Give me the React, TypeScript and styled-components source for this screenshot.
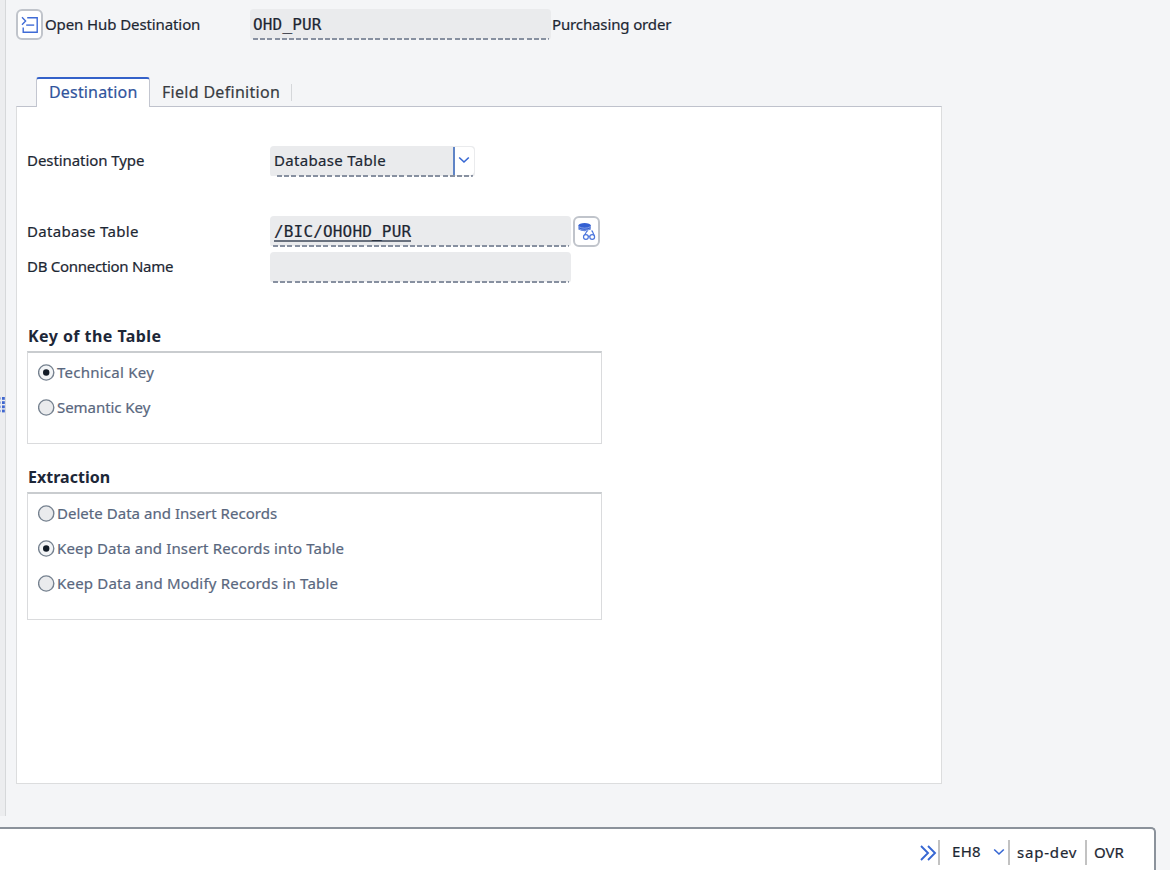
import React from "react";
import styled, { createGlobalStyle, css } from "styled-components";

const Global = createGlobalStyle`
  * { box-sizing: border-box; }
  html, body { margin: 0; background: #f4f5f7; overflow: hidden; }
  body {
    font-family: "Noto Sans", "Open Sans", sans-serif;
    font-size: 15px;
    color: #1d2733;
    -webkit-text-stroke-width: 0.2px;
  }
`;

const Screen = styled.div`
  width: 1170px;
  height: 870px;
  display: flex;
  flex-direction: column;
  background: #f4f5f7;
`;

const Workspace = styled.div`
  display: flex;
  height: 827px;
  flex: none;
`;

const Splitter = styled.div`
  width: 6px;
  height: 816px;
  background: #ecedef;
  border-right: 1px solid #d6d8da;
  display: flex;
  align-items: center;
  svg { display: block; margin-bottom: 6px; }
`;

const Content = styled.main`
  padding: 9px 0 0 10px;
  display: flex;
  flex-direction: column;
`;

const HeaderRow = styled.div`
  display: flex;
  align-items: center;
  height: 31px;
`;

const Text = styled.span<{ $track?: number; $width?: number; $size?: number; $indent?: number; $lift?: number }>`
  display: block;
  white-space: pre;
  line-height: 20px;
  font-size: ${(p) => p.$size ?? 15}px;
  letter-spacing: ${(p) => p.$track ?? 0}px;
  padding-left: ${(p) => p.$indent ?? 0}px;
  padding-bottom: ${(p) => p.$lift ?? 2}px;
  ${(p) => p.$width && css`width: ${p.$width}px; flex: none;`}
`;

const IconButton = styled.button<{ $gap?: number }>`
  width: 27px;
  height: 31px;
  flex: none;
  padding: 0;
  margin-left: ${(p) => p.$gap ?? 0}px;
  display: flex;
  align-items: center;
  justify-content: center;
  background: #fff;
  border: 2px solid #c0c4cb;
  border-radius: 6px;
  svg { display: block; }
`;

const Field = styled.div<{ $width: number; $inset?: number }>`
  width: ${(p) => p.$width}px;
  height: 31px;
  flex: none;
  display: flex;
  align-items: stretch;
  border-radius: 4px;
  background:
    repeating-linear-gradient(90deg, #8790a0 0 5px, transparent 5px 7.2px)
      ${(p) => p.$inset ?? 3}px 100% / calc(100% - ${(p) => (p.$inset ?? 3) + 2}px) 2px no-repeat,
    linear-gradient(#eaebed, #eaebed) 0 0 / 100% 30px no-repeat;
`;

const FieldText = styled(Text)`
  padding: 4px 0 0 4px;
`;

const Mono = styled.span<{ $link?: boolean }>`
  font-family: "DejaVu Sans Mono", monospace;
  font-size: 16px;
  letter-spacing: 0.17px;
  line-height: 19px;
  height: 20px;
  margin: 6px 0 0 ${(p) => (p.$link ? 4 : 3)}px;
  ${(p) => p.$link && css`border-bottom: 2px solid #69717e;`}
`;

const TabBar = styled.div`
  display: flex;
  margin: 37px 0 0 20px;
  height: 30px;
  position: relative;
  z-index: 1;
`;

const Tab = styled.div<{ $active?: boolean }>`
  height: 30px;
  display: flex;
  padding-top: 5px;
  ${(p) =>
    p.$active
      ? css`
          width: 114px;
          padding-left: 12px;
          color: #31549c;
          background: #fff;
          border: 1px solid #c3c6d0;
          border-top: 2px solid #3461c9;
          border-bottom: 0;
          border-radius: 3px 3px 0 0;
          padding-top: 3px;
        `
      : css`
          width: 141px;
          padding-left: 12px;
          color: #383c42;
        `}
`;

const TabDivider = styled.div`
  width: 1px;
  height: 17px;
  margin-top: 7px;
  background: #d5d7da;
`;

const Panel = styled.section`
  width: 926px;
  height: 678px;
  margin-top: -1px;
  background: #fff;
  border: 1px solid #dcddde;
  border-top: 1px solid #bfc2cc;
  padding: 39px 0 0 10px;
`;

const FormRow = styled.div<{ $gap: number }>`
  display: flex;
  align-items: center;
  height: 31px;
  margin-bottom: ${(p) => p.$gap}px;
`;

const Dropdown = styled.div`
  width: 21px;
  height: 28px;
  margin: 1px 1px 0 auto;
  background: #fff;
  border-left: 2px solid #5f84c6;
  border-radius: 0 4px 4px 0;
  padding: 9px 0 0 3px;
  svg { display: block; }
`;

const GroupTitle = styled.h2<{ $track: number }>`
  margin: 0;
  padding-left: 1px;
  font-size: 16px;
  font-weight: 700;
  line-height: 22px;
  height: 26px;
  letter-spacing: ${(p) => p.$track}px;
  color: #1d2738;
  -webkit-text-stroke-width: 0;
`;

const Group = styled.div<{ $height: number; $gap?: number }>`
  width: 575px;
  height: ${(p) => p.$height}px;
  border: 1px solid #dadbdd;
  border-top: 2px solid #c9cccf;
  margin-bottom: ${(p) => p.$gap ?? 0}px;
  padding: 2px 0 0 10px;
`;

const RadioRow = styled.label`
  height: 35.4px;
  display: flex;
  align-items: center;
  color: #59677e;
  gap: 2px;
  svg { display: block; margin-top: -1px; }
`;

const StatusBar = styled.footer`
  width: 1156px;
  height: 43px;
  background: #fff;
  border-top: 2px solid #8b929b;
  border-right: 2px solid #8b929b;
  border-top-right-radius: 5px;
  display: flex;
  align-items: center;
  justify-content: flex-end;
  padding: 6px 29px 0 0;
`;

const StatusDivider = styled.div`
  width: 2px;
  height: 25px;
  background: #c2c2c2;
`;

const StatusCell = styled.div<{ $width: number; $pad: number; $lift?: number }>`
  width: ${(p) => p.$width}px;
  padding-left: ${(p) => p.$pad}px;
  padding-bottom: ${(p) => p.$lift ?? 0}px;
  display: flex;
  align-items: center;
  flex: none;
  svg { display: block; }
`;

const Radio = ({ checked }: { checked?: boolean }) => (
  <svg width="17" height="17" viewBox="0 0 17 17">
    <circle cx="8.2" cy="8.5" r="7.6" fill={checked ? "#f3f5f7" : "#eaebed"} stroke="#75818f" strokeWidth="1.4" />
    {checked && <circle cx="8.2" cy="8.5" r="3.2" fill="#131c27" />}
  </svg>
);

const Chevron = () => (
  <svg width="12" height="8" viewBox="0 0 12 8" fill="none" stroke="#3767d3" strokeWidth="1.6">
    <path d="M1.2 1.5 L6 6 L10.8 1.5" />
  </svg>
);

const keyOptions = [
  { label: "Technical Key", track: 0.25, checked: true },
  { label: "Semantic Key", track: -0.05 },
];

const extractionOptions = [
  { label: "Delete Data and Insert Records", track: 0.03 },
  { label: "Keep Data and Insert Records into Table", track: 0.14, checked: true },
  { label: "Keep Data and Modify Records in Table", track: 0.19 },
];

export default function App() {
  return (
    <Screen>
      <Global />
      <Workspace>
        <Splitter>
          <svg width="5" height="16" viewBox="0 0 5 16" fill="#3f66cf">
            {[0, 4.2, 8.4, 12.6].map((y) => (
              <React.Fragment key={y}>
                <rect x="0" y={y + 0.3} width="0.8" height="2.2" opacity=".6" />
                <rect x="2" y={y} width="2.8" height="2.8" />
              </React.Fragment>
            ))}
          </svg>
        </Splitter>
        <Content>
          <HeaderRow>
            <IconButton>
              <svg width="18" height="18" viewBox="0 0 18 18" fill="none" stroke="#3f6bd6" strokeWidth="1.4">
                <path d="M1 1.3 L4.6 5 L1 8.7" />
                <path d="M6.2 1.8 H16.2 V16.2 H2.2 V11.5" />
                <path d="M5.2 9.1 H13.2" />
              </svg>
            </IconButton>
            <Text $width={207} $indent={2} $track={-0.1}>Open Hub Destination</Text>
            <Field $width={301}><Mono>OHD_PUR</Mono></Field>
            <Text $indent={1} $track={-0.13}>Purchasing order</Text>
          </HeaderRow>
          <TabBar>
            <Tab $active><Text $size={16} $track={0.17}>Destination</Text></Tab>
            <Tab><Text $size={16} $track={0.3}>Field Definition</Text></Tab>
            <TabDivider />
          </TabBar>
          <Panel>
            <FormRow $gap={39}>
              <Text $width={243} $track={-0.07} $lift={4}>Destination Type</Text>
              <Field $width={205} $inset={7}>
                <FieldText $track={0.33}>Database Table</FieldText>
                <Dropdown><Chevron /></Dropdown>
              </Field>
            </FormRow>
            <FormRow $gap={5}>
              <Text $width={243} $track={0.3}>Database Table</Text>
              <Field $width={301}><Mono $link>/BIC/OHOHD_PUR</Mono></Field>
              <IconButton $gap={2}>
                <svg width="20" height="19" viewBox="-1 0 20 19">
                  <ellipse cx="6.6" cy="3.4" rx="6.1" ry="2.4" fill="#3460d2" />
                  <path d="M0.5 3.4 V7.4 Q6.6 11 12.7 7.4 V3.4 Z" fill="#3460d2" />
                  <path d="M0.5 4.6 Q6.6 7.8 12.7 4.6 M0.5 6.7 Q6.6 9.9 12.7 6.7" stroke="#a9bcec" strokeWidth="0.7" fill="none" />
                  <path d="M5 19 V13 L8.3 8.5 H14 L18 14 V19 Z" fill="#fff" />
                  <g stroke="#4c76dd" fill="#fff" strokeWidth="1.2">
                    <path d="M6 14 L9 9 H10 M16.3 14 L14.3 9 H13.2 M10 14.3 H11.8" fill="none" />
                    <circle cx="7.9" cy="15" r="2.4" />
                    <circle cx="14.2" cy="15" r="2.4" />
                  </g>
                </svg>
              </IconButton>
            </FormRow>
            <FormRow $gap={42}>
              <Text $width={243} $track={-0.28} $lift={4}>DB Connection Name</Text>
              <Field $width={301} />
            </FormRow>
            <GroupTitle $track={0.44}>Key of the Table</GroupTitle>
            <Group $height={93} $gap={22}>
              {keyOptions.map((o) => (
                <RadioRow key={o.label}><Radio checked={o.checked} /><Text $track={o.track}>{o.label}</Text></RadioRow>
              ))}
            </Group>
            <GroupTitle $track={0.03}>Extraction</GroupTitle>
            <Group $height={128}>
              {extractionOptions.map((o) => (
                <RadioRow key={o.label}><Radio checked={o.checked} /><Text $track={o.track}>{o.label}</Text></RadioRow>
              ))}
            </Group>
          </Panel>
        </Content>
      </Workspace>
      <StatusBar>
        <StatusCell $width={18} $pad={0}>
          <svg width="17" height="16" viewBox="0 0 17 16" fill="none" stroke="#3767d3" strokeWidth="1.9">
            <path d="M1 1 L8 8 L1 15 M8 1 L15 8 L8 15" />
          </svg>
        </StatusCell>
        <StatusDivider />
        <StatusCell $width={68} $pad={12} $lift={2}><Text $width={41} $track={0.3}>EH8</Text><Chevron /></StatusCell>
        <StatusDivider />
        <StatusCell $width={75} $pad={7}><Text $track={0.8}>sap-dev</Text></StatusCell>
        <StatusDivider />
        <StatusCell $width={38} $pad={7}><Text>OVR</Text></StatusCell>
      </StatusBar>
    </Screen>
  );
}
